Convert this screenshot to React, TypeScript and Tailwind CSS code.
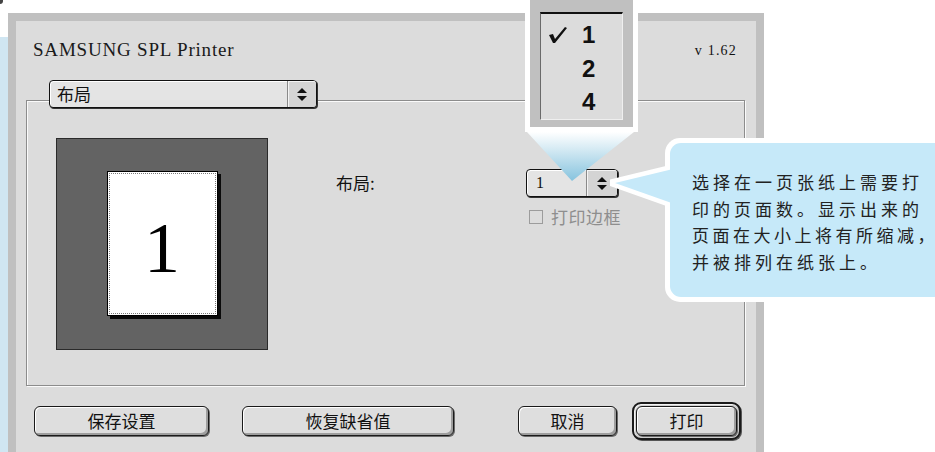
import React from 'react';

const cjk = "font-['Noto_Sans_CJK_SC','Noto_Sans',sans-serif]";
const serif = "font-['Liberation_Serif',serif]";

const Stepper: React.FC = () => (
  <svg width="10" height="13" viewBox="0 0 10 13">
    <path d="M5 0 L10 5 L0 5 Z" fill="#111" />
    <path d="M0 8 L10 8 L5 13 Z" fill="#111" />
  </svg>
);

const MacButton: React.FC<{ label: string; width: string }> = ({ label, width }) => (
  <div
    className={`${width} h-[30px] rounded-[6px] border border-[#1a1a1a] bg-[#dedede] shadow-[inset_1px_1px_0_#fff,inset_-2px_-2px_0_#9e9e9e,1px_1px_0_#6a6a6a] flex items-center justify-center text-[17px] text-[#111] ${cjk}`}
  >
    {label}
  </div>
);

const App: React.FC = () => {
  return (
    <div className="relative w-[935px] h-[452px] overflow-hidden bg-white flex">
      <div className="absolute left-0 top-0 w-[3px] h-[4px] rounded-br-[3px] bg-[#444]" />

      {/* left blue strip */}
      <div className="w-2 h-[415px] mt-[37px] shrink-0 bg-[#d0e6f2]" />

      {/* dialog */}
      <div className="mt-[13px] w-[756px] h-[460px] shrink-0 border-8 border-[#c0c0c0] bg-[#dcdcdc] flex flex-col">
        <div className="h-[59px] flex justify-between items-start pl-[17px] pr-[19px] pt-[18px]">
          <span className={`${serif} text-[19px] leading-[22px] tracking-[0.8px] text-[#1a1a1a]`}>SAMSUNG SPL Printer</span>
          <span className={`${serif} mt-[4px] text-[14px] leading-[16px] tracking-[1.2px] text-[#111]`}>v 1.62</span>
        </div>

        {/* popup + group box */}
        <div className="flex flex-col">
          <div className="relative z-10 ml-[33px] w-[268px] h-[28px] rounded-[4px] border border-[#111] bg-[#e4e4e4] shadow-[1px_1px_0_#333,inset_1px_1px_0_#fff] flex">
            <span className={`flex-1 pl-[7px] text-[17px] leading-[26px] text-[#111] ${cjk}`}>布局</span>
            <div className="w-[29px] border-l border-[#8a8a8a] bg-[#d4d4d4] shadow-[inset_1px_1px_0_#f4f4f4] flex items-center justify-center rounded-r-[3px]">
              <Stepper />
            </div>
          </div>

          <div className="-mt-[8px] ml-[10px] w-[719px] h-[286px] border border-[#8c8c8c] shadow-[inset_1px_1px_0_#fafafa,1px_1px_0_#fafafa] flex">
            <div className="ml-[29px] mt-[37px] w-[212px] h-[212px] shrink-0 bg-[#636363] border border-[#2a2a2a] flex items-center justify-center">
              <div className="w-[111px] h-[145px] bg-white border border-black shadow-[3px_3px_0_#0a0a0a] p-[1px] -mt-[1px]">
                <div className="w-full h-full border border-dotted border-[#7a7a7a] flex items-center justify-center">
                  <span className={`${serif} text-[72px] leading-none text-black mt-[8px]`}>1</span>
                </div>
              </div>
            </div>

            <div className="ml-[68px] mt-[68px] flex items-start">
              <span className={`w-[190px] mt-[2px] text-[17px] leading-[24px] text-[#111] ${cjk}`}>布局:</span>
              <div className="flex flex-col">
                <div className="w-[92px] h-[28px] rounded-[4px] border border-[#111] bg-[#e4e4e4] shadow-[1px_1px_0_#333,inset_1px_1px_0_#fff] flex">
                  <span className={`flex-1 pl-[9px] text-[16px] leading-[26px] text-[#111] ${serif}`}>1</span>
                  <div className="w-[31px] border-l border-[#8a8a8a] bg-[#d4d4d4] shadow-[inset_1px_1px_0_#f4f4f4] flex items-center justify-center rounded-r-[3px]">
                    <Stepper />
                  </div>
                </div>
                <div className="mt-[10px] ml-[3px] flex items-center gap-[8px]">
                  <div className="w-[14px] h-[14px] border border-[#9c9c9c]" />
                  <span className={`text-[17px] leading-[20px] tracking-[0.5px] text-[#8e8e8e] ${cjk}`}>打印边框</span>
                </div>
              </div>
            </div>
          </div>
        </div>

        {/* buttons */}
        <div className="mt-[16px] ml-[18px] h-[38px] flex items-center">
          <MacButton label="保存设置" width="w-[175px]" />
          <div className="ml-[33px]">
            <MacButton label="恢复缺省值" width="w-[212px]" />
          </div>
          <div className="ml-[64px]">
            <MacButton label="取消" width="w-[99px]" />
          </div>
          <div className="ml-[15px] w-[109px] h-[38px] rounded-[9px] border-[2px] border-[#1a1a1a] bg-[#cfcfcf] shadow-[inset_1px_1px_0_#f2f2f2,1px_1px_0_#555] flex items-center justify-center">
            <MacButton label="打印" width="w-[101px]" />
          </div>
        </div>
      </div>

      {/* enlarged popup menu */}
      <div className="absolute left-[525px] top-0 w-[113px] h-[132px] bg-white px-[5px] pb-[5px]">
        <div className="w-full h-full bg-[#c0c0c0] pt-[12px] px-[10px] pb-[7px]">
          <div className="w-full h-full bg-[#dcdcdc] border-t-2 border-t-[#111] border-l border-l-[#6a6a6a] border-r border-r-[#efefef] border-b border-b-[#efefef] flex flex-col pt-[4px]">
            {['1', '2', '4'].map((n, i) => (
              <div key={n} className="h-[34px] flex items-center">
                <div className="w-[41px] pl-[7px]">
                  {i === 0 && (
                    <svg width="20" height="18" viewBox="0 0 20 18">
                      <path d="M1 9 L5 8 L7 13 L17 1 L19 2 L7 17 L5 17 Z" fill="#111" />
                    </svg>
                  )}
                </div>
                <span className="font-['Liberation_Sans',sans-serif] font-bold text-[24px] leading-none text-[#111]">{n}</span>
              </div>
            ))}
          </div>
        </div>
      </div>

      {/* zoom wedge */}
      <svg className="absolute left-[527px] top-[132px]" width="107" height="50" viewBox="0 0 107 50">
        <defs>
          <linearGradient id="wedge" x1="0" y1="0" x2="0" y2="1">
            <stop offset="0" stopColor="#ffffff" />
            <stop offset="1" stopColor="#86c3de" />
          </linearGradient>
        </defs>
        <polygon points="0,0 107,0 45,49" fill="url(#wedge)" />
      </svg>

      {/* callout */}
      <div className="absolute left-[665px] top-[138px] w-[290px] h-[164px] rounded-[15px] bg-white p-[5px]">
        <div className={`w-full h-full rounded-[11px] bg-[#c6e9f9] pl-[22px] pt-[26px] text-[17px] leading-[26.5px] tracking-[4px] text-[#222] whitespace-nowrap ${cjk}`}>
          选择在一页张纸上需要打
          <br />
          印的页面数。显示出来的
          <br />
          <span className="tracking-[3.5px]">页面在大小上将有所缩减</span><span className="tracking-normal">，</span>
          <br />
          并被排列在纸张上。
        </div>
      </div>
      <svg className="absolute left-[610px] top-[160px]" width="64" height="50" viewBox="0 0 64 50">
        <polyline points="60,9.5 5,23 60,42.5" fill="none" stroke="#ffffff" strokeWidth="9" strokeLinejoin="miter" />
        <polygon points="5,23 63,9 63,43.6" fill="#c6e9f9" />
      </svg>
    </div>
  );
};

export default App;
